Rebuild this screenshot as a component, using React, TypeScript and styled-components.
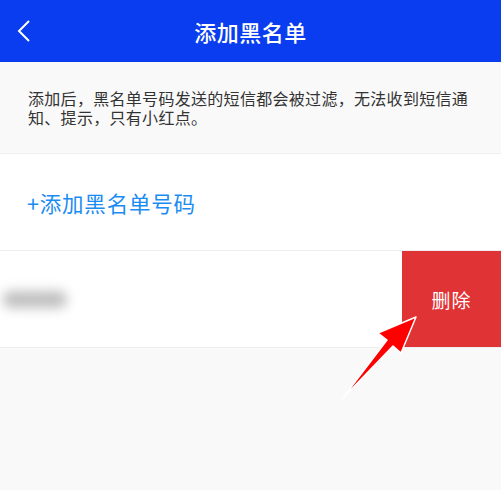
import React from 'react';
import styled, { createGlobalStyle } from 'styled-components';

const GlobalStyle = createGlobalStyle`
  html, body {
    margin: 0;
    padding: 0;
    background: #f9f9f9;
  }
  body {
    font-family: "Noto Sans CJK SC", "Noto Sans", sans-serif;
  }
`;

const Page = styled.div`
  position: relative;
  width: 501px;
  height: 490px;
  overflow: hidden;
  background: #f9f9f9;
`;

const Header = styled.header`
  position: relative;
  display: flex;
  align-items: center;
  justify-content: center;
  height: 62px;
  background: #0a3df0;
  color: #fff;
`;

const BackButton = styled.button`
  position: absolute;
  left: 12px;
  top: 50%;
  transform: translateY(-50%);
  display: flex;
  padding: 4px;
  border: 0;
  background: none;
  cursor: pointer;
`;

const Title = styled.h1`
  margin: 0;
  font-size: 22px;
  font-weight: 500;
  letter-spacing: 0.5px;
`;

const Notice = styled.div`
  display: flex;
  align-items: center;
  height: 92px;
  padding: 0 28px;
  box-sizing: border-box;
  border-bottom: 1px solid #eeeeee;
  font-size: 16px;
  line-height: 19px;
  color: #333;
  letter-spacing: 0.3px;
`;

const Row = styled.div`
  display: flex;
  align-items: center;
  height: 96px;
  background: #fff;
  border-bottom: 1px solid #eeeeee;
`;

const AddLink = styled.a`
  padding-left: 27px;
  font-size: 21.5px;
  color: #1b8cf2;
  letter-spacing: 0.8px;
  text-decoration: none;
`;

const Number = styled.div`
  flex: 1;
  height: 100%;
  display: flex;
  align-items: center;
`;

const Blurred = styled.div`
  width: 64px;
  height: 17px;
  margin-left: 3px;
  background: #bfbfbf;
  border-radius: 8px;
  filter: blur(6px);
`;

const DeleteButton = styled.button`
  width: 99px;
  height: 100%;
  border: 0;
  background: #e03335;
  color: #fff;
  font-family: inherit;
  font-size: 19px;
  letter-spacing: 1px;
  cursor: pointer;
`;

const Pointer = styled.svg`
  position: absolute;
  left: 0;
  top: 0;
  pointer-events: none;
`;

const App: React.FC = () => {
  return (
    <Page>
      <GlobalStyle />
      <Header>
        <BackButton aria-label="返回">
          <svg width="16" height="24" viewBox="0 0 16 24">
            <path d="M13 2 L3 12 L13 22" fill="none" stroke="#fff" strokeWidth="2" />
          </svg>
        </BackButton>
        <Title>添加黑名单</Title>
      </Header>
      <Notice>添加后，黑名单号码发送的短信都会被过滤，无法收到短信通知、提示，只有小红点。</Notice>
      <Row>
        <AddLink href="#">+添加黑名单号码</AddLink>
      </Row>
      <Row>
        <Number>
          <Blurred />
        </Number>
        <DeleteButton>删除</DeleteButton>
      </Row>
      <Pointer width="501" height="490" viewBox="0 0 501 490">
        <polygon
          points="416,317 401,353 393,346 342,399 387,340 378,333"
          fill="#ff0000"
          stroke="#fff"
          strokeWidth="1.5"
          strokeLinejoin="round"
        />
      </Pointer>
    </Page>
  );
};

export default App;
